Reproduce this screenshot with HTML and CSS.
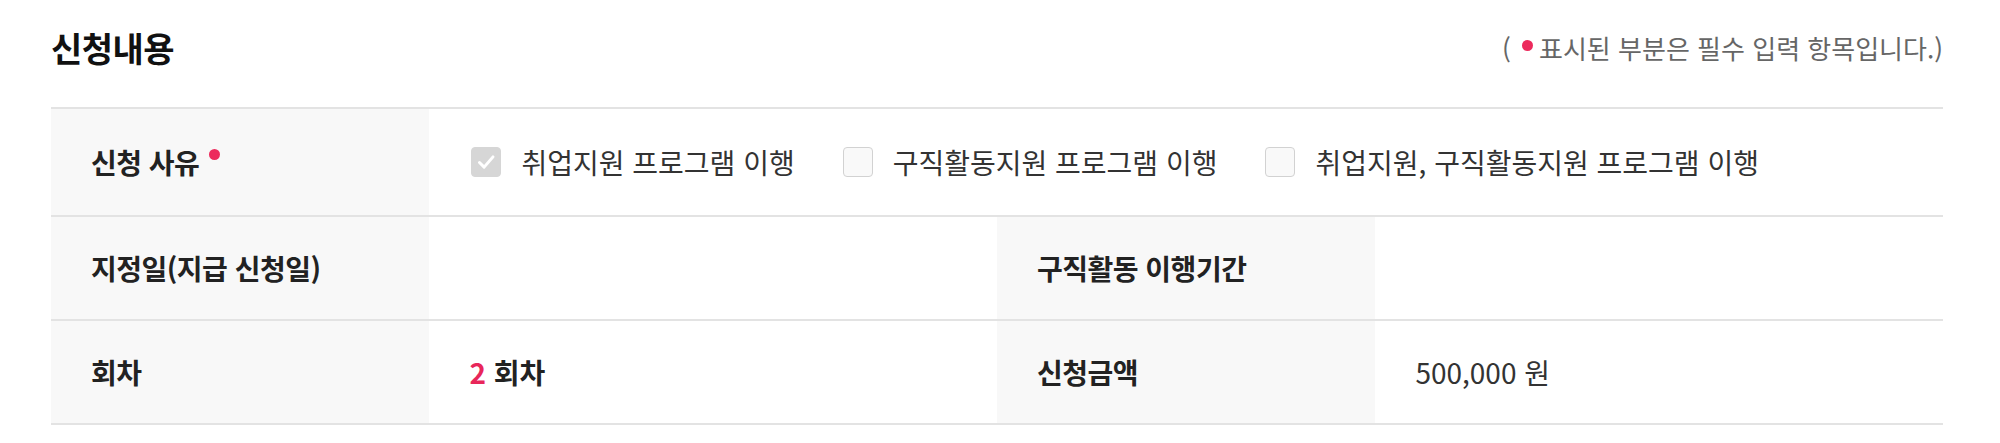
FILE: index.html
```html
<!DOCTYPE html>
<html lang="ko">

<head>
    <meta charset="UTF-8">
    <meta name="viewport" content="width=device-width, initial-scale=1.0">
    <title>신청내용</title>
    <link rel="stylesheet" href="styles.css">
</head>

<body>
    <div class="section">
        <div class="section-head">
            <h2 class="section-title">신청내용</h2>
            <p class="required-note">( <span class="dot"></span>표시된 부분은 필수 입력 항목입니다.)</p>
        </div>

        <div class="info-table">
            <div class="info-row info-row-tall">
                <div class="info-label"><span>신청 사유<span class="dot dot-req"></span></span></div>
                <div class="info-value info-value-wide">
                    <label class="check-item">
                        <span class="check-box is-checked">
                            <svg viewBox="0 0 30 30" width="30" height="30">
                                <path d="M8 15.5l5 5 9.5-11" fill="none" stroke="#fff" stroke-width="3.2" stroke-linecap="round" stroke-linejoin="round"/>
                            </svg>
                        </span>
                        취업지원 프로그램 이행
                    </label>
                    <label class="check-item">
                        <span class="check-box"></span>
                        구직활동지원 프로그램 이행
                    </label>
                    <label class="check-item">
                        <span class="check-box"></span>
                        취업지원, 구직활동지원 프로그램 이행
                    </label>
                </div>
            </div>
            <div class="info-row">
                <div class="info-label">지정일(지급 신청일)</div>
                <div class="info-value"></div>
                <div class="info-label">구직활동 이행기간</div>
                <div class="info-value"></div>
            </div>
            <div class="info-row">
                <div class="info-label">회차</div>
                <div class="info-value value-strong"><span><span class="point">2</span> 회차</span></div>
                <div class="info-label">신청금액</div>
                <div class="info-value">500,000 원</div>
            </div>
        </div>
    </div>
</body>

</html>
```

FILE: styles.css
```css
body {
    margin: 0;
    background-color: #fff;
    font-family: "Noto Sans CJK KR", "Noto Sans", sans-serif;
    color: #222;
}

.section {
    padding: 0 57px 0 51px;
}

.section-head {
    display: flex;
    justify-content: space-between;
    align-items: center;
    height: 94px;
    margin-bottom: 13px;
}

.section-title {
    margin: 0;
    font-size: 34px;
    font-weight: 700;
    color: #111;
    letter-spacing: -0.5px;
}

.required-note {
    margin: 0;
    font-size: 26px;
    color: #666;
}

.dot {
    display: inline-block;
    width: 11px;
    height: 11px;
    border-radius: 50%;
    background-color: #ec2a5c;
    margin: 0 6px 0 4px;
    vertical-align: 8px;
}

.dot-req {
    margin-left: 10px;
    vertical-align: 14px;
}

.info-table {
    border-top: 2px solid #e3e3e3;
}

.info-row {
    display: grid;
    grid-template-columns: 20% 30% 20% 30%;
    height: 102px;
    border-bottom: 2px solid #e3e3e3;
}

.info-row-tall {
    height: 106px;
}

.info-label,
.info-value {
    display: flex;
    align-items: center;
    padding: 0 40px;
    font-size: 28px;
}

.info-label {
    background-color: #f8f8f8;
    font-weight: 700;
    color: #222;
    letter-spacing: -0.5px;
}

.info-value {
    color: #333;
}

.info-value-wide {
    grid-column: span 3;
    gap: 48px;
    padding-left: 42px;
}

.value-strong {
    font-weight: 700;
    color: #222;
}

.point {
    color: #e8265a;
}

.check-item {
    display: flex;
    align-items: center;
    gap: 20px;
}

.check-box {
    display: inline-flex;
    width: 28px;
    height: 28px;
    border: 1px solid #d2d2d2;
    border-radius: 4px;
    background-color: #f9f9f9;
}

.check-box.is-checked {
    background-color: #d6d6d6;
    border-color: #d6d6d6;
}

.check-box svg {
    width: 28px;
    height: 28px;
}
```
